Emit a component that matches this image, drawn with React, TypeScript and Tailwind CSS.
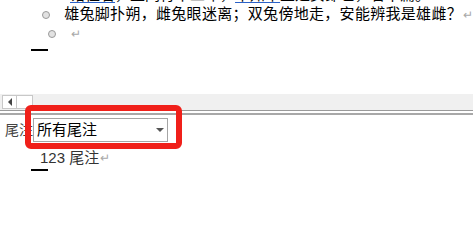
import React from 'react';

const font = { fontFamily: '"Liberation Sans", "Noto Sans CJK SC", sans-serif' };

const Bullet = () => (
  <span className="w-[8px] h-[8px] rounded-full border border-[#9a9a9a] bg-[#e2e2e2] shrink-0" />
);

const Ret = () => <span className="text-[#a8a8a8] text-[12px] ml-[1px]">↵</span>;

export default function App() {
  return (
    <div className="relative w-[473px] h-[249px] overflow-hidden bg-white" style={font}>
      {/* document body */}
      <div className="h-[94px] overflow-hidden">
        <div className="flex flex-col mt-[-14px] text-[15px] text-black">
          <div className="flex items-center h-[19px] pl-[70px] whitespace-nowrap">
            <span className="underline decoration-[#2b62c8] underline-offset-2">诸位看</span>
            <span>，正同行十二年，</span>
            <span className="underline decoration-[#2b62c8] underline-offset-2">不知木</span>
            <span>兰是女郎也，看本篇。</span>
          </div>
          <div className="flex items-center h-[19px] whitespace-nowrap">
            <div className="w-[70px] flex justify-end pr-[14px]"><Bullet /></div>
            <span className="tracking-[0.3px]">雄兔脚扑朔，雌兔眼迷离；双兔傍地走，安能辨我是雄雌？</span>
            <Ret />
          </div>
          <div className="flex items-center h-[20px]">
            <div className="w-[70px] flex justify-end pr-[14px]"><Bullet /></div>
            <Ret />
          </div>
          <div className="ml-[31px] mt-[5px] w-[17px] h-[2px] bg-black" />
        </div>
      </div>

      {/* horizontal scrollbar */}
      <div className="h-[16px] bg-[#f0f0f0] flex items-center pl-[2px]">
        <div className="w-[15px] h-[14px] border border-[#c8c8c8] bg-white flex items-center justify-center">
          <div className="w-0 h-0 border-y-[4px] border-y-transparent border-r-[4px] border-r-[#444]" />
        </div>
        <div className="w-[16px] h-[14px] border border-l-0 border-[#c8c8c8] bg-white" />
      </div>
      <div className="h-[1px] bg-[#9a9a9a]" />
      <div className="h-[2px] bg-white" />
      <div className="h-[2px] bg-[#a8a8a8]" />

      {/* endnote pane */}
      <div className="bg-white h-[134px]">
        <div className="flex items-center h-[26px] mt-[2px] pl-[5px] text-[14px]">
          <span className="w-[28px] text-[#444]">尾注</span>
          <div className="w-[135px] h-[24px] border border-[#a5a5a5] bg-white flex items-center justify-between pl-[3px] pr-[3px] text-[15px] text-black">
            <span>所有尾注</span>
            <div className="w-0 h-0 border-x-[4px] border-x-transparent border-t-[4px] border-t-[#555]" />
          </div>
        </div>
        <div className="mt-[6px] pl-[40px] h-[18px] flex items-center text-[15px] text-[#333]">
          <span>123 尾注</span>
          <Ret />
        </div>
        <div className="ml-[31px] mt-[2px] w-[17px] h-[2px] bg-black" />
      </div>

      {/* red annotation box */}
      <div className="absolute left-[25px] top-[105px] w-[157px] h-[44px] border-[6px] border-[#f0201a] rounded-[6px]" />
    </div>
  );
}
